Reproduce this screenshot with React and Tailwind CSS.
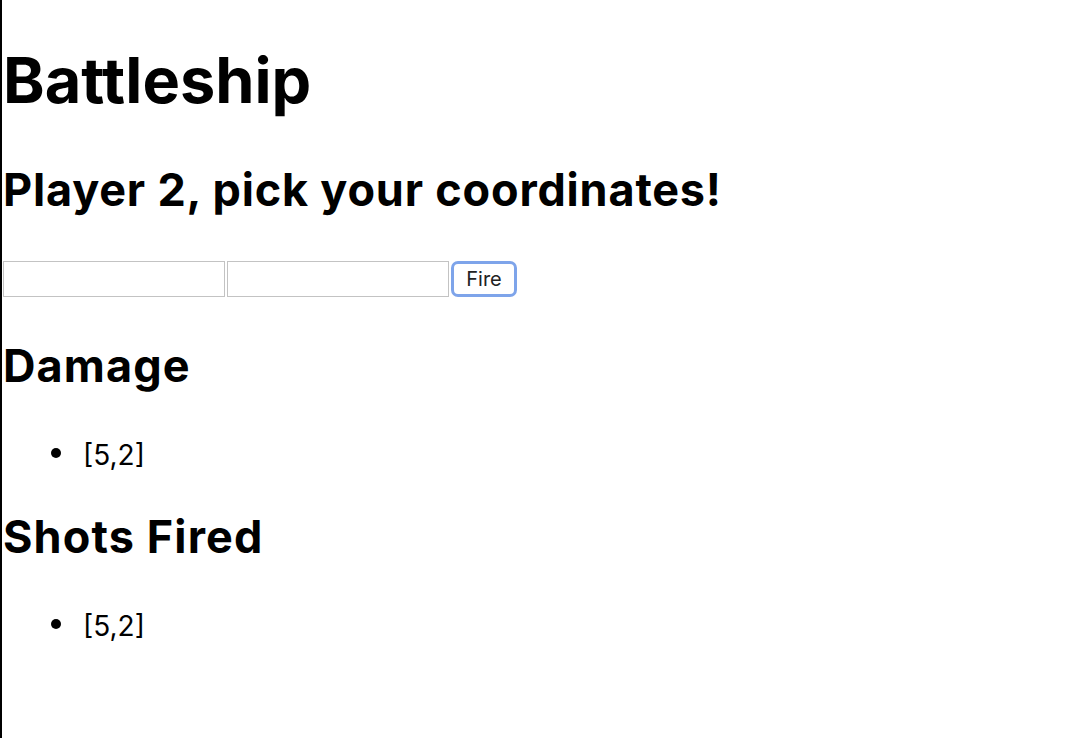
import React, { useState } from "react";

const Coord = ({ value }) => (
  <li className="flex items-center">
    <span className="ml-[48px] mt-[-4px] h-[10px] w-[10px] rounded-full bg-black" />
    <span className="ml-[22px]">[{value.join(",")}]</span>
  </li>
);

const App = () => {
  const [row, setRow] = useState("");
  const [col, setCol] = useState("");
  const damage = [[5, 2]];
  const shots = [[5, 2]];

  return (
    <div
      className="min-h-screen border-l-2 border-black bg-white pl-px text-black"
      style={{ fontFamily: "Inter, 'Noto Sans', sans-serif" }}
    >
      <h1 className="pt-[41px] text-[63px] font-bold leading-[78px]">Battleship</h1>
      <h2 className="mt-[45px] text-[45px] font-bold tracking-[0.018em] leading-[52px]">
        Player 2, pick your coordinates!
      </h2>

      {/* Coordinate inputs */}
      <div className="mt-[45px] flex items-center gap-[2px]">
        <input
          value={row}
          onChange={(e) => setRow(e.target.value)}
          className="h-[36px] w-[222px] border border-[#c3c3c3] bg-white px-1 outline-none"
        />
        <input
          value={col}
          onChange={(e) => setCol(e.target.value)}
          className="h-[36px] w-[222px] border border-[#c3c3c3] bg-white px-1 outline-none"
        />
        <button className="h-[36px] w-[66px] rounded-[7px] border-[3px] border-[#7ea4ea] bg-white text-[20px] text-[#222]">
          Fire
        </button>
      </div>

      {/* Damage */}
      <h2 className="mt-[43px] text-[45px] font-bold tracking-[0.025em] leading-[52px]">Damage</h2>
      <ul className="mt-[45px] text-[28px] font-normal leading-[36px]">
        {damage.map((d, i) => (
          <Coord key={i} value={d} />
        ))}
      </ul>

      {/* Shots fired */}
      <h2 className="mt-[38px] text-[45px] font-bold tracking-[0.025em] leading-[52px]">Shots Fired</h2>
      <ul className="mt-[45px] text-[28px] font-normal leading-[36px]">
        {shots.map((s, i) => (
          <Coord key={i} value={s} />
        ))}
      </ul>
    </div>
  );
};

export default App;
